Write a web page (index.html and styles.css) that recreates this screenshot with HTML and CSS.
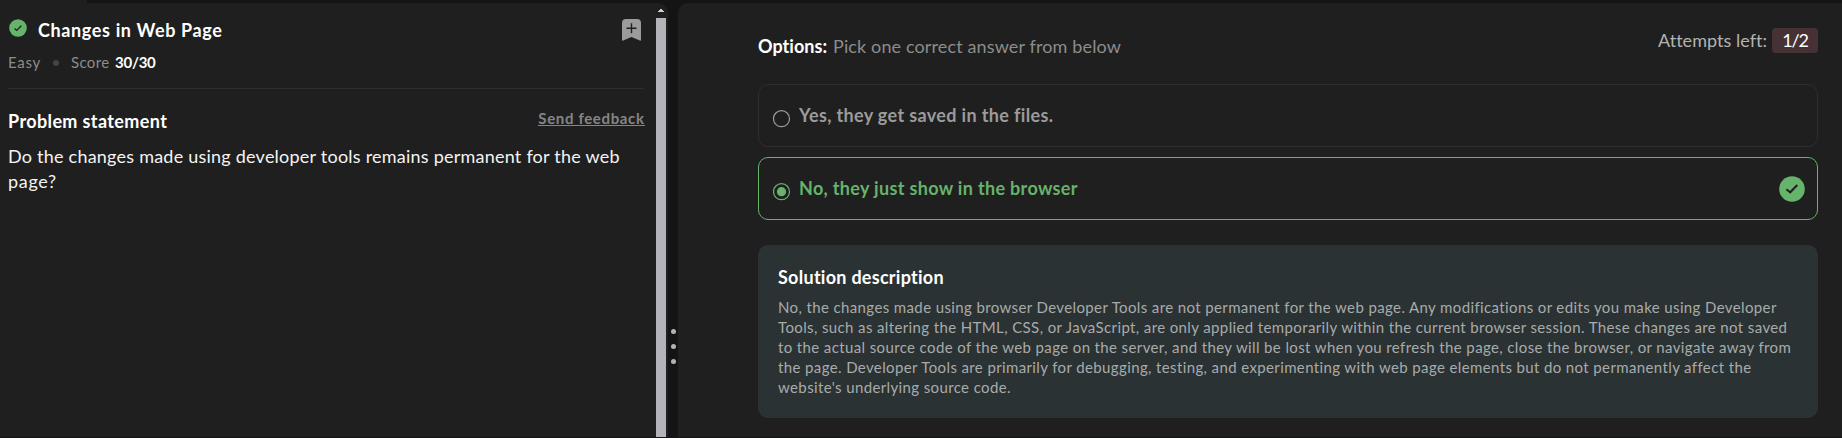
FILE: index.html
```html
<!DOCTYPE html>
<html lang="en">
<head>
<meta charset="utf-8">
<title>Changes in Web Page</title>
<link rel="stylesheet" href="styles.css">
</head>
<body>
<div class="tab-strip"><div class="tab-active"></div></div>
<div class="workspace">
  <section class="problem">
    <div class="problem-body">
      <header class="problem-head">
        <svg class="solved" width="18" height="18" viewBox="0 0 18 18"><circle cx="9" cy="9" r="8.8" fill="#66b36b"/><path d="M5.6 9.5l2.1 1.9 4.6-4.6" fill="none" stroke="#1f1f1f" stroke-width="1.3"/></svg>
        <h1 class="title">Changes in Web Page</h1>
        <svg class="bookmark" width="19" height="22" viewBox="0 0 19 22"><path d="M0 21V4a4 4 0 0 1 4-4h11a4 4 0 0 1 4 4v17q0 1-1.2.5l-8.3-3.6-8.3 3.6q-1.2.5-1.2-.5z" fill="#9b9b9b"/><path d="M9.5 4.2v10M4.5 9.2h10" stroke="#1f1f1f" stroke-width="1.4"/></svg>
      </header>
      <div class="meta">
        <span class="level">Easy</span><i class="dot"></i><span class="score">Score</span><b class="points">30/30</b>
      </div>
      <div class="statement-head">
        <h2 class="statement-title">Problem statement</h2>
        <a class="feedback">Send feedback</a>
      </div>
      <p class="statement">Do the changes made using developer tools remains permanent for the web<br><span class="last">page?</span></p>
    </div>
    <div class="scrollbar">
      <svg width="6" height="3" viewBox="0 0 6 3" shape-rendering="crispEdges"><path d="M0 3V2h1V1h1V0h2v1h1v1h1v1z" fill="#d0d0d0"/></svg>
      <div class="thumb"></div>
    </div>
  </section>
  <div class="divider"><i></i><i></i><i></i></div>
  <section class="answers">
    <div class="answers-head">
      <p class="prompt"><b>Options:</b><span>Pick one correct answer from below</span></p>
      <p class="attempts"><span>Attempts left:</span><b class="badge">1/2</b></p>
    </div>
    <div class="option">
      <svg class="radio" width="18" height="18" viewBox="0 0 18 18"><circle cx="8.5" cy="8.7" r="8" fill="none" stroke="#9b9b9b" stroke-width="1.2"/></svg>
      <span class="label label-a">Yes, they get saved in the files.</span>
    </div>
    <div class="option correct">
      <svg class="radio" width="18" height="18" viewBox="0 0 18 18"><circle cx="8.5" cy="8.7" r="8" fill="none" stroke="#66b36b" stroke-width="1.2"/><circle cx="8.5" cy="8.7" r="4.6" fill="#66b36b"/></svg>
      <span class="label label-b">No, they just show in the browser</span>
      <svg class="tick" width="26" height="26" viewBox="0 0 26 26"><circle cx="13" cy="13" r="12.8" fill="#66b36b"/><path d="M7.4 13.3l3.8 3L18.3 9" fill="none" stroke="#1f1f1f" stroke-width="2"/></svg>
    </div>
    <article class="solution">
      <h2 class="solution-title">Solution description</h2>
      <p class="solution-text">No, the changes made using browser Developer Tools are not permanent for the web page. Any modifications or edits you make using Developer<br>Tools, such as altering the HTML, CSS, or JavaScript, are only applied temporarily within the current browser session. These changes are not saved<br>to the actual source code of the web page on the server, and they will be lost when you refresh the page, close the browser, or navigate away from<br>the page. Developer Tools are primarily for debugging, testing, and experimenting with web page elements but do not permanently affect the<br>website's underlying source code.</p>
    </article>
  </section>
</div>
</body>
</html>
```
FILE: styles.css
```css
* { box-sizing: border-box; margin: 0; padding: 0; }
body {
  height: 438px;
  display: flex;
  flex-direction: column;
  overflow: hidden;
  background: #141414;
  color: #fff;
  font-family: Lato, "Liberation Sans", sans-serif;
  font-size: 18px;
}
svg { display: block; flex: none; }
.tab-strip { height: 3px; flex: none; }
.tab-active { width: 87px; height: 3px; background: #1f1f1f; }
.workspace { flex: none; height: 434px; display: flex; }

.problem {
  width: 668px;
  display: flex;
  background: #1f1f1f;
  border-top-right-radius: 10px;
}
.problem-body { width: 656px; padding: 15px 12px 0 8px; }
.problem-head { height: 24px; display: flex; }
.solved { margin: 1px 0 0 1px; }
.title { margin-left: 11px; font-size: 18px; line-height: 24px; letter-spacing: .63px; flex: 1; }
.bookmark { margin: 1px 3px 0 0; }
.meta {
  height: 47px;
  padding-top: 10px;
  display: flex;
  font-size: 15px;
  line-height: 20px;
  color: #8c8c8c;
  border-bottom: 1px solid #2e2e2e;
}
.level { width: 45px; letter-spacing: .7px; }
.dot { width: 6px; height: 6px; margin: 8px 12px 0 0; border-radius: 50%; background: #444; }
.score { width: 44px; letter-spacing: .35px; }
.points { color: #fff; letter-spacing: -.25px; }
.statement-head { display: flex; justify-content: space-between; padding-top: 20px; height: 55px; }
.statement-title { font-size: 18px; line-height: 24px; letter-spacing: .38px; }
.feedback {
  height: 17px;
  margin-right: -.6px;
  font-size: 15px;
  font-weight: 700;
  line-height: 18px;
  letter-spacing: .64px;
  color: #858585;
  border-bottom: 1px solid #858585;
}
.statement { line-height: 25px; letter-spacing: .228px; white-space: nowrap; color: #f4f4f4; }
.last { letter-spacing: .7px; }

.scrollbar { width: 10px; padding-top: 6px; display: flex; flex-direction: column; align-items: center; }
.thumb { width: 10px; flex: 1; margin-top: 6px; background: #b3b3b9; }

.divider {
  width: 10px;
  padding: 326px 0 0 3px;
  display: flex;
  flex-direction: column;
  gap: 10px;
}
.divider i { width: 5px; height: 5px; border-radius: 50%; background: #b3b3b3; }

.answers {
  flex: 1;
  padding: 24px 24px 0 80px;
  background: #1f1f1f;
  border-top-left-radius: 10px;
}
.answers-head { height: 57px; display: flex; justify-content: space-between; line-height: 24px; }
.prompt { display: flex; padding-top: 7px; color: #8c8c8c; }
.prompt b { width: 75px; color: #fff; letter-spacing: .05px; }
.prompt span { letter-spacing: .13px; }
.attempts { display: flex; gap: 5px; padding-top: 1px; color: #b3b3b3; }
.attempts span { line-height: 24px; letter-spacing: .03px; }
.badge {
  width: 46px;
  height: 25px;
  border-radius: 4px;
  background: #463234;
  color: #fff;
  font-weight: 400;
  line-height: 24px;
  letter-spacing: -1.2px;
  text-align: center;
}
.option {
  height: 63px;
  margin-bottom: 10px;
  padding: 0 12px 0 14px;
  display: flex;
  border: 1px solid #2e2e2e;
  border-radius: 10px;
  color: #9b9b9b;
}
.correct { border-color: #66b36b; color: #66b36b; }
.radio { margin-top: 25px; }
.label { flex: 1; margin: 18px 0 0 8px; font-weight: 700; line-height: 24px; }
.label-a { letter-spacing: .35px; }
.label-b { letter-spacing: .33px; }
.tick { margin-top: 18px; }
.solution {
  height: 173px;
  margin-top: 25px;
  padding: 20px 20px 0;
  border-radius: 10px;
  background: #2b3233;
}
.solution-title { font-size: 18px; line-height: 24px; letter-spacing: .27px; }
.solution-text {
  margin-top: 8px;
  font-size: 15px;
  line-height: 20px;
  letter-spacing: .378px;
  white-space: nowrap;
  color: #a8abab;
}
```
